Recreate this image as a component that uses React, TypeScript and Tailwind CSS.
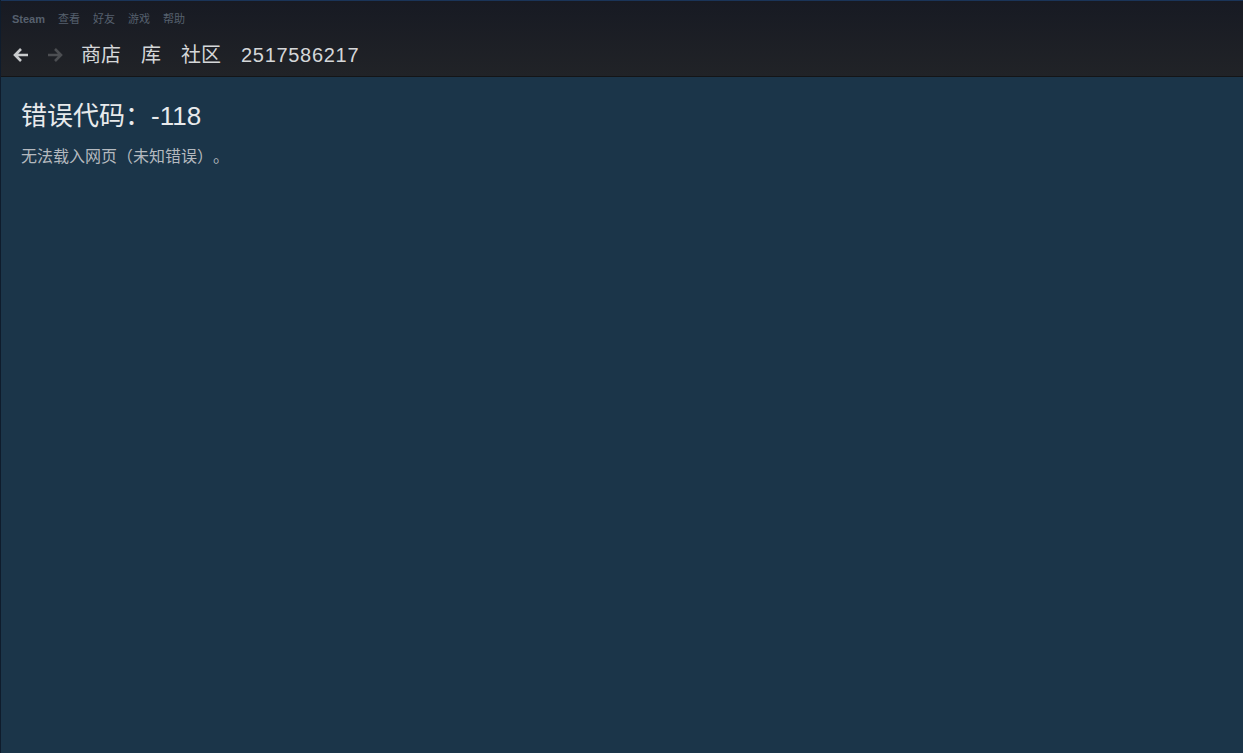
import React from 'react';

const font = { fontFamily: 'Arial, "Liberation Sans", "Noto Sans CJK SC", sans-serif' };

const menus = ['Steam', '查看', '好友', '游戏', '帮助'];
const tabs = ['商店', '库', '社区'];

const Arrow: React.FC<{ dir: 'left' | 'right'; color: string }> = ({ dir, color }) => (
  <svg width="18" height="18" viewBox="0 0 18 18" className={dir === 'right' ? 'rotate-180' : ''}>
    <path d="M16 9H3M9 3L3 9l6 6" stroke={color} strokeWidth="2.6" fill="none" />
  </svg>
);

const App: React.FC = () => {
  return (
    <div
      className="w-[1243px] h-[753px] flex flex-col bg-[#1b3549] border-l border-[#0f1c2c] [text-spacing-trim:space-all]"
      style={font}
    >
      <div className="h-[77px] flex flex-col bg-gradient-to-b from-[#171a23] to-[#212327] border-t border-[#1a3458] border-b border-b-[#141517]">
        <div className="flex items-center gap-[13px] pl-[11px] pt-[13px] h-[23px] text-[11px] text-[#56606e]">
          {menus.map((m) => (
            <span key={m} className={m === 'Steam' ? 'font-bold' : ''}>{m}</span>
          ))}
        </div>
        <div className="flex items-center pl-[11px] mt-[19px] h-[24px]">
          <Arrow dir="left" color="#c9cbcd" />
          <span className="w-[16px]" />
          <Arrow dir="right" color="#4c4e52" />
          <div className="flex items-center gap-[20px] ml-[17px] text-[20px] text-[#d5d7d9]">
            {tabs.map((t) => (
              <span key={t}>{t}</span>
            ))}
            <span className="tracking-[0.7px]">2517586217</span>
          </div>
        </div>
      </div>
      <div className="px-[20px] pt-[22px]">
        <h1 className="text-[26px] leading-[34px] text-[#e8eaec]">错误代码：-118</h1>
        <p className="mt-[14px] text-[16px] leading-[20px] text-[#b4b9bf]">无法载入网页（未知错误）。</p>
      </div>
    </div>
  );
};

export default App;
